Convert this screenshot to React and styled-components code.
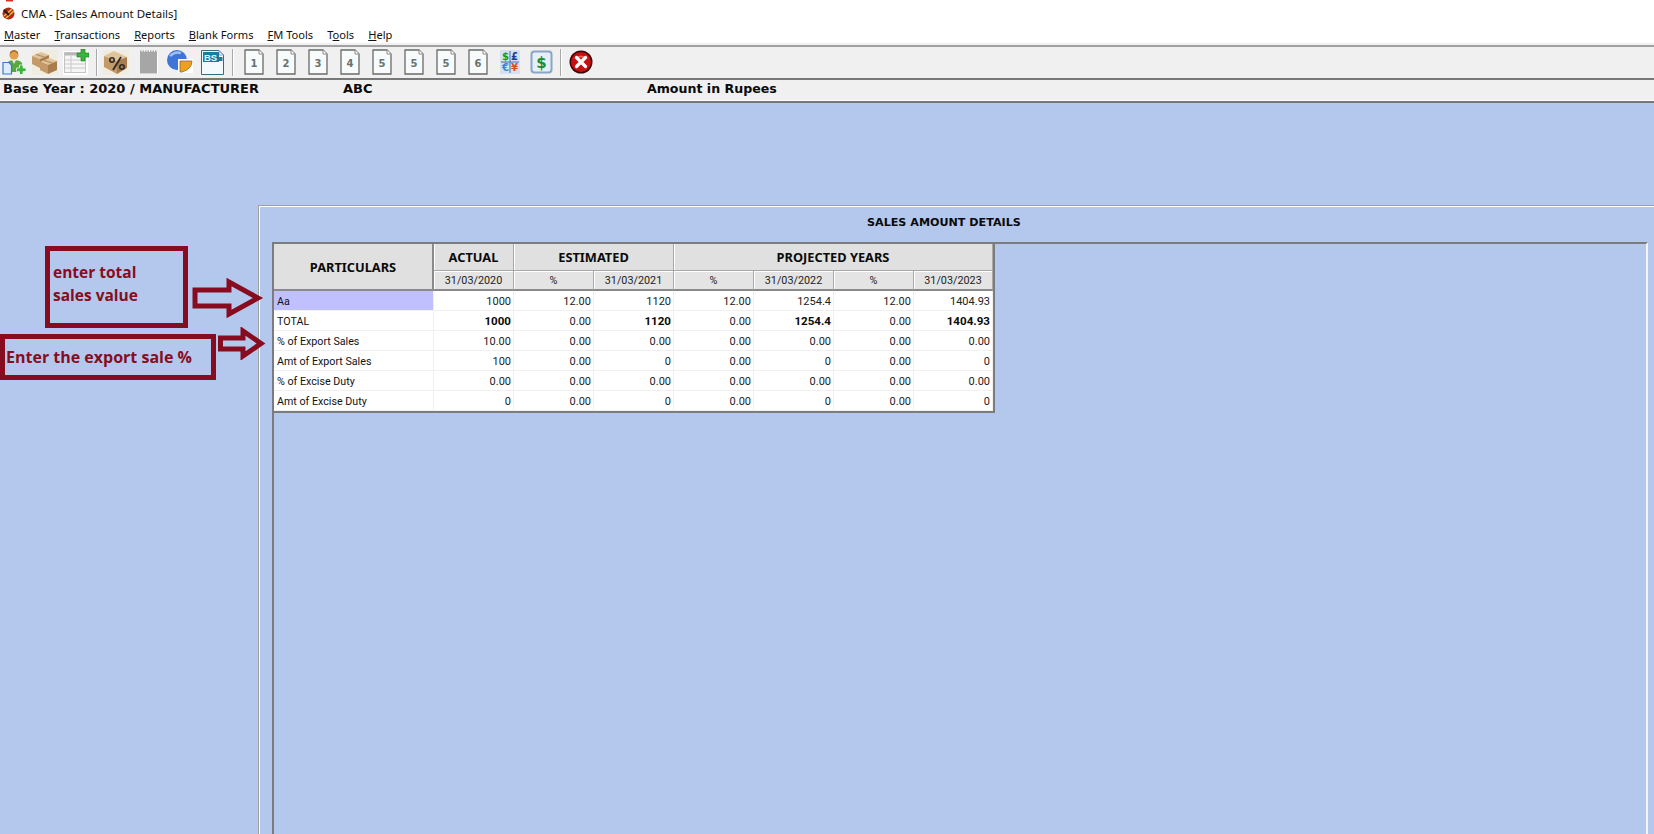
import React from "react";
import styled, { createGlobalStyle } from "styled-components";

const MAROON = "#880c20";

const menus = [
  ["M", "aster"],
  ["T", "ransactions"],
  ["R", "eports"],
  ["B", "lank Forms"],
  ["F", "M Tools"],
  ["T", "ools", true],
  ["H", "elp"],
];

const rows = [
  { name: "Aa", active: true, cells: ["1000", "12.00", "1120", "12.00", "1254.4", "12.00", "1404.93"] },
  { name: "TOTAL", bold: true, cells: ["1000", "0.00", "1120", "0.00", "1254.4", "0.00", "1404.93"] },
  { name: "% of Export Sales", cells: ["10.00", "0.00", "0.00", "0.00", "0.00", "0.00", "0.00"] },
  { name: "Amt of Export Sales", cells: ["100", "0.00", "0", "0.00", "0", "0.00", "0"] },
  { name: "% of Excise Duty", cells: ["0.00", "0.00", "0.00", "0.00", "0.00", "0.00", "0.00"] },
  { name: "Amt of Excise Duty", cells: ["0", "0.00", "0", "0.00", "0", "0.00", "0"] },
];

const subHeads = ["31/03/2020", "%", "31/03/2021", "%", "31/03/2022", "%", "31/03/2023"];

// toolbar icons
const AppIcon = () => (
  <svg width="15" height="21" viewBox="0 0 15 21">
    <rect x="5" y="0" width="7" height="1.5" fill="#d83020" />
    <circle cx="7.5" cy="13.5" r="6" fill="#b02a18" />
    <path d="M3 16 L11 9 M5 18 L13 11" stroke="#e8c040" strokeWidth="1.6" />
    <path d="M3 10 L8 15" stroke="#2a1a10" strokeWidth="2" />
  </svg>
);

const UserIcon = () => (
  <svg width="24" height="26" viewBox="0 0 24 26">
    <circle cx="12" cy="6" r="4.6" fill="#e0a050" />
    <path d="M8 5 Q12 0 16 5 L16 3 Q12 -1 8 3Z" fill="#a86a20" />
    <path d="M4 23 L5 14 Q7 11 12 11 Q18 11 20 14 L21 23Z" fill="#58a83c" />
    <path d="M10 11 L12 15 L14 11Z" fill="#e8f0e0" />
    <path d="M1 13.5 H7 L9.5 16 V25 H1Z" fill="#dcebff" stroke="#3a78d8" strokeWidth="1.2" />
    <path d="M17.5 16 H21 V19 H24 V22.5 H21 V25.5 H17.5 V22.5 H14.5 V19 H17.5Z" fill="#3cb43c" stroke="#fff" strokeWidth="0.7" />
  </svg>
);

const BoxShape = ({ x, y }) => (
  <g transform={`translate(${x} ${y})`}>
    <path d="M0 4 L9 0 L17 3 L8 7Z" fill="#e0c49a" />
    <path d="M0 4 L8 7 V16 L0 12Z" fill="#c49a68" />
    <path d="M8 7 L17 3 V12 L8 16Z" fill="#a87c4c" />
    <path d="M4 2.3 L12.5 5.2" stroke="#b89468" strokeWidth="1.4" />
  </g>
);

const BoxesIcon = () => (
  <svg width="26" height="25" viewBox="0 0 26 25">
    <rect width="26" height="25" fill="#f0ecdf" />
    <BoxShape x="0" y="2" />
    <BoxShape x="8" y="8" />
  </svg>
);

const TableIcon = () => (
  <svg width="26" height="26" viewBox="0 0 26 26">
    <rect x="0" y="2" width="25" height="24" fill="#fff" />
    <rect x="1.5" y="3.5" width="21" height="20" fill="#f6f6f6" stroke="#c4c4c4" />
    <rect x="2" y="4" width="20" height="2.5" fill="#b8b8b8" />
    <path d="M2 11 H22 M2 15 H22 M2 19 H22 M8 7 V23" stroke="#c8c8c8" />
    <path d="M18 0 H22 V4 H26 V8 H22 V12 H18 V8 H14 V4 H18Z" fill="#3cb43c" stroke="#1a7a1a" strokeWidth="0.6" />
  </svg>
);

const PercentBoxIcon = () => (
  <svg width="26" height="25" viewBox="0 0 26 25">
    <rect width="26" height="25" fill="#f0ecdf" />
    <path d="M1 6 L11 1 L24 7 L14 11Z" fill="#e0c49a" />
    <path d="M1 6 L14 11 V24 L1 17Z" fill="#c49a68" />
    <path d="M14 11 L24 7 V18 L14 24Z" fill="#a87c4c" />
    <circle cx="9" cy="10" r="2.2" fill="none" stroke="#2a2a2a" strokeWidth="1.6" />
    <path d="M10 20 L18 7" stroke="#2a2a2a" strokeWidth="1.8" />
    <circle cx="19" cy="17" r="2.2" fill="none" stroke="#2a2a2a" strokeWidth="1.6" />
  </svg>
);

const NoteIcon = () => (
  <svg width="19" height="24" viewBox="0 0 19 24">
    <rect x="1" y="2" width="17" height="22" fill="#a6a6a6" />
    <path d="M1 1.5 H18" stroke="#a6a6a6" strokeWidth="2" strokeDasharray="1.5 1" />
    <path d="M18.5 3 V24 H1" stroke="#fff" fill="none" />
  </svg>
);

const PieIcon = () => (
  <svg width="26" height="24" viewBox="0 0 26 24">
    <circle cx="10" cy="10" r="10" fill="#3f74d8" />
    <path d="M3 6 Q8 1 14 3" stroke="#9fc0f4" strokeWidth="2.5" fill="none" />
    <rect x="11" y="9" width="15" height="14" fill="#fff" />
    <path d="M13 11 H25 Q25 19 15 22 H13Z" fill="#f0a020" stroke="#8a6a30" strokeWidth="0.8" />
  </svg>
);

const BsIcon = () => (
  <svg width="23" height="25" viewBox="0 0 23 25">
    <path d="M0.5 0.5 H18 L22.5 5 V24.5 H0.5Z" fill="#f2fafc" stroke="#3a6a80" />
    <path d="M18 0.5 V5 H22.5" fill="none" stroke="#8aa" />
    <rect x="2" y="2" width="16" height="10" fill="#1c7c9e" />
    <text x="3" y="10.5" fontFamily="Liberation Sans, sans-serif" fontWeight="700" fontSize="9.5" fill="#dff">BS</text>
    <rect x="17" y="7" width="4.5" height="4" fill="#1c7c9e" />
  </svg>
);

const DocIcon = ({ n }) => (
  <svg width="20" height="26" viewBox="0 0 20 26">
    <path d="M1 1 H15 L19 5 V25 H1Z" fill="#f7fbfb" stroke="#6a6a6a" strokeWidth="1.3" />
    <path d="M15 1 V5 H19" fill="#fff" stroke="#8a8a8a" />
    <text x="10" y="17.5" textAnchor="middle" fontFamily="DejaVu Sans, sans-serif" fontWeight="700" fontSize="10" fill="#6a7070">{n}</text>
  </svg>
);

const CurrencyIcon = () => (
  <svg width="20" height="24" viewBox="0 0 20 24">
    <rect width="20" height="24" fill="#d4e0f4" />
    <path d="M10 1 V23 M1 12 H19" stroke="#4a6aa8" />
    <g fontFamily="DejaVu Sans, sans-serif" fontWeight="700" fontSize="10" textAnchor="middle">
      <text x="5.5" y="10" fill="#10a010">$</text>
      <text x="14.5" y="10" fill="#203a90">£</text>
      <text x="5.5" y="21" fill="#3a80d8">€</text>
      <text x="14.5" y="21" fill="#e04820">¥</text>
    </g>
  </svg>
);

const DollarIcon = () => (
  <svg width="23" height="24" viewBox="0 0 23 24">
    <rect width="23" height="24" fill="#eeeee2" />
    <rect x="1.5" y="1.5" width="20" height="21" rx="3" fill="#e6eef8" stroke="#8aa4cc" strokeWidth="2" />
    <text x="11.5" y="18" textAnchor="middle" fontFamily="DejaVu Sans, sans-serif" fontWeight="700" fontSize="15" fill="#14902c">$</text>
  </svg>
);

const CloseIcon = () => (
  <svg width="24" height="24" viewBox="0 0 24 24">
    <circle cx="12" cy="12" r="11.5" fill="#3a0808" />
    <circle cx="12" cy="12" r="10" fill="#c81010" />
    <path d="M4 9 Q12 2 20 9 Q12 6 4 9Z" fill="#f06060" />
    <path d="M7.5 7.5 L16.5 16.5 M16.5 7.5 L7.5 16.5" stroke="#fff" strokeWidth="3.2" strokeLinecap="round" />
  </svg>
);

const BigArrow = () => (
  <svg width="72" height="40" viewBox="0 0 72 40">
    <path d="M3 12 H37 V4 L66 20 L37 36 V28 H3Z" fill="none" stroke={MAROON} strokeWidth="5" />
  </svg>
);

const SmallArrow = () => (
  <svg width="48" height="33" viewBox="0 0 48 33">
    <path d="M2.5 11 H25 V4 L43 16.5 L25 29 V22 H2.5Z" fill="none" stroke={MAROON} strokeWidth="5" />
  </svg>
);

const App = () => {
  return (
    <Page>
      <GlobalStyle />
      <TitleBar>
        <AppIcon />
        <span>CMA - [Sales Amount Details]</span>
      </TitleBar>
      <MenuBar>
        {menus.map(([key, rest, second]) => (
          <MenuItem key={key + rest}>
            {second ? (
              <>
                {key}
                <u>{rest[0]}</u>
                {rest.slice(1)}
              </>
            ) : (
              <>
                <u>{key}</u>
                {rest}
              </>
            )}
          </MenuItem>
        ))}
      </MenuBar>
      <Toolbar>
        <ToolGroup $size={28} $gap={3}>
          <ToolButton><UserIcon /></ToolButton>
          <ToolButton><BoxesIcon /></ToolButton>
          <ToolButton><TableIcon /></ToolButton>
        </ToolGroup>
        <ToolSeparator $left={6} />
        <ToolGroup $size={32} $left={2}>
          <ToolButton><PercentBoxIcon /></ToolButton>
          <ToolButton><NoteIcon /></ToolButton>
          <ToolButton><PieIcon /></ToolButton>
          <ToolButton><BsIcon /></ToolButton>
        </ToolGroup>
        <ToolSeparator $left={4} />
        <ToolGroup $size={32} $left={4}>
          {["1", "2", "3", "4", "5", "5", "5", "6"].map((n, i) => (
            <ToolButton key={i}><DocIcon n={n} /></ToolButton>
          ))}
          <ToolButton><CurrencyIcon /></ToolButton>
          <ToolButton $shift={-2}><DollarIcon /></ToolButton>
        </ToolGroup>
        <ToolSeparator $left={2} />
        <ToolGroup $size={32} $left={3}>
          <ToolButton><CloseIcon /></ToolButton>
        </ToolGroup>
      </Toolbar>
      <StatusBar>
        <StatusField $width={340}>Base Year : 2020 / MANUFACTURER</StatusField>
        <StatusField $width={304}>ABC</StatusField>
        <StatusField $size={12.6}>Amount in Rupees</StatusField>
      </StatusBar>
      <Workspace>
        <Panel>
          <PanelTitle>SALES AMOUNT DETAILS</PanelTitle>
          <GridFrame>
            <Grid>
              <ParticularsHead>PARTICULARS</ParticularsHead>
              <GroupHead $span={1}>ACTUAL</GroupHead>
              <GroupHead $span={2}>ESTIMATED</GroupHead>
              <GroupHead $span={4}>PROJECTED YEARS</GroupHead>
              {subHeads.map((h, i) => (
                <SubHead key={i}>{h}</SubHead>
              ))}
              {rows.map((row) => (
                <React.Fragment key={row.name}>
                  <NameCell $active={row.active}>{row.name}</NameCell>
                  {row.cells.map((c, i) => (
                    <ValueCell key={i} $bold={row.bold && i % 2 === 0}>{c}</ValueCell>
                  ))}
                </React.Fragment>
              ))}
            </Grid>
          </GridFrame>
        </Panel>
        <NoteBox $top={143} $left={45} $width={143} $height={82} $pad={3} $size={15.5} $shift={6}>
          enter total<br />sales value
        </NoteBox>
        <ArrowSlot $top={175} $left={192}><BigArrow /></ArrowSlot>
        <NoteBox $top={231} $left={0} $width={216} $height={46} $pad={1} $size={16}>
          Enter the export sale %
        </NoteBox>
        <ArrowSlot $top={224} $left={218}><SmallArrow /></ArrowSlot>
      </Workspace>
    </Page>
  );
};

export default App;

const GlobalStyle = createGlobalStyle`
  html, body {
    margin: 0;
    padding: 0;
    height: 100%;
    overflow: hidden;
  }
  #root {
    height: 100%;
  }
`;

const Page = styled.div`
  height: 834px;
  display: flex;
  flex-direction: column;
  background: #fff;
  font-family: "Noto Sans", sans-serif;
  overflow: hidden;
`;

const TitleBar = styled.div`
  height: 24px;
  flex: none;
  display: flex;
  align-items: flex-start;
  gap: 5px;
  padding-left: 1px;
  font-size: 11.5px;
  color: #111;
  span {
    line-height: 28px;
  }
`;

const MenuBar = styled.div`
  height: 19px;
  flex: none;
  display: flex;
  gap: 14px;
  padding: 1px 0 0 4px;
  box-sizing: border-box;
  align-items: center;
`;

const MenuItem = styled.div`
  font-size: 11.1px;
  color: #111;
`;

const Toolbar = styled.div`
  height: 32px;
  flex: none;
  display: flex;
  align-items: center;
  background: #f0f0f0;
  border-top: 3px solid #f0f0f0;
  box-sizing: content-box;
  position: relative;
  box-shadow: inset 0 1px 0 #f0f0f0;
  &::before {
    content: "";
    position: absolute;
    left: 0;
    right: 0;
    top: -1px;
    height: 2px;
    background: #a0a0a0;
  }
`;

const ToolGroup = styled.div`
  display: grid;
  grid-auto-flow: column;
  grid-auto-columns: ${(p) => p.$size}px;
  column-gap: ${(p) => p.$gap || 0}px;
  margin-left: ${(p) => p.$left || 0}px;
`;

const ToolButton = styled.div`
  display: flex;
  align-items: center;
  justify-content: center;
  height: 28px;
  margin-left: ${(p) => p.$shift || 0}px;
`;

const ToolSeparator = styled.div`
  width: 1px;
  height: 27px;
  flex: none;
  background: #a8a8a8;
  border-right: 1px solid #fff;
  margin-left: ${(p) => p.$left}px;
`;

const StatusBar = styled.div`
  height: 23px;
  flex: none;
  display: flex;
  align-items: center;
  padding: 0 0 3px 3px;
  box-sizing: border-box;
  background: #f0f0f0;
  border-top: 2px solid #787878;
  border-bottom: 1px solid #fff;
  box-shadow: 0 2px 0 #787878;
  position: relative;
`;

const StatusField = styled.div`
  width: ${(p) => (p.$width ? `${p.$width}px` : "auto")};
  flex: none;
  font-family: "DejaVu Sans", sans-serif;
  font-weight: 700;
  font-size: ${(p) => p.$size || 13}px;
  color: #0a0a0a;
`;

const Workspace = styled.div`
  flex: 1;
  position: relative;
  margin-top: 2px;
  padding: 102px 0 0 258px;
  background: #b4c8ee;
`;

const Panel = styled.div`
  height: 640px;
  width: 1420px;
  border: 1px solid #a0a0a0;
  box-shadow: inset 1px 1px 0 #fff;
  padding: 7px 0 0 13px;
  box-sizing: border-box;
`;

const PanelTitle = styled.div`
  height: 29px;
  padding-left: 595px;
  line-height: 19px;
  font-family: "DejaVu Sans", sans-serif;
  font-weight: 700;
  font-size: 11.15px;
  color: #0a0a0a;
`;

const GridFrame = styled.div`
  width: 1376px;
  height: 600px;
  border-top: 2px solid #7c7c7c;
  border-left: 2px solid #7c7c7c;
  border-right: 2px solid #f4f4f4;
  box-sizing: border-box;
`;

const Grid = styled.div`
  display: grid;
  grid-template-columns: 160px repeat(6, 80px) 79px;
  grid-template-rows: 27px 20px repeat(6, 20px);
  width: 719px;
  box-sizing: content-box;
  background: #fff;
  border-right: 2px solid #7c7c7c;
  border-bottom: 2px solid #7c7c7c;
  font-family: Roboto, sans-serif;
  font-size: 11px;
  color: #111;
`;

const HeadBase = styled.div`
  display: flex;
  align-items: center;
  justify-content: center;
  background: #e0e0e0;
  box-sizing: border-box;
  font-family: "Noto Sans", sans-serif;
  font-weight: 700;
  font-size: 12.8px;
  color: #0a0a0a;
`;

const ParticularsHead = styled(HeadBase)`
  grid-row: span 2;
  border-right: 2px solid #8a8a8a;
  border-bottom: 2px solid #8a8a8a;
`;

const GroupHead = styled(HeadBase)`
  grid-column: span ${(p) => p.$span};
  border-right: 1px solid #a8a8a8;
  border-bottom: 1px solid #a8a8a8;
  box-shadow: inset 1px 0 0 #fff;
`;

const SubHead = styled.div`
  display: flex;
  align-items: center;
  justify-content: center;
  padding-top: 1px;
  background: #e4e4e4;
  box-sizing: border-box;
  border-right: 1px solid #a8a8a8;
  border-bottom: 2px solid #8a8a8a;
  box-shadow: inset 1px 1px 0 #fff;
  font-size: 10.8px;
  color: #222;
`;

const NameCell = styled.div`
  display: flex;
  align-items: center;
  padding: 1px 0 0 3px;
  box-sizing: border-box;
  background: ${(p) => (p.$active ? "#c0c0ff" : "#fff")};
  border-bottom: 1px solid #f0f0f0;
  border-right: 1px solid #f0f0f0;
  font-size: 10.7px;
  color: #111;
`;

const ValueCell = styled.div`
  display: flex;
  align-items: center;
  justify-content: flex-end;
  padding: 1px 2px 0 0;
  box-sizing: border-box;
  border-right: 1px solid #f0f0f0;
  border-bottom: 1px solid #f0f0f0;
  font-size: ${(p) => (p.$bold ? 11.6 : 11)}px;
  font-weight: ${(p) => (p.$bold ? 700 : 400)};
  color: ${(p) => (p.$bold ? "#0a0a0a" : "#222")};
`;

const NoteBox = styled.div`
  position: absolute;
  top: ${(p) => p.$top}px;
  left: ${(p) => p.$left}px;
  width: ${(p) => p.$width}px;
  height: ${(p) => p.$height}px;
  box-sizing: border-box;
  border: 5px solid ${MAROON};
  display: flex;
  align-items: center;
  padding: 0 0 ${(p) => p.$shift || 0}px ${(p) => p.$pad}px;
  font-family: "Open Sans", sans-serif;
  font-weight: 700;
  font-size: ${(p) => p.$size}px;
  line-height: 23px;
  color: ${MAROON};
`;

const ArrowSlot = styled.div`
  position: absolute;
  top: ${(p) => p.$top}px;
  left: ${(p) => p.$left}px;
  line-height: 0;
`;
